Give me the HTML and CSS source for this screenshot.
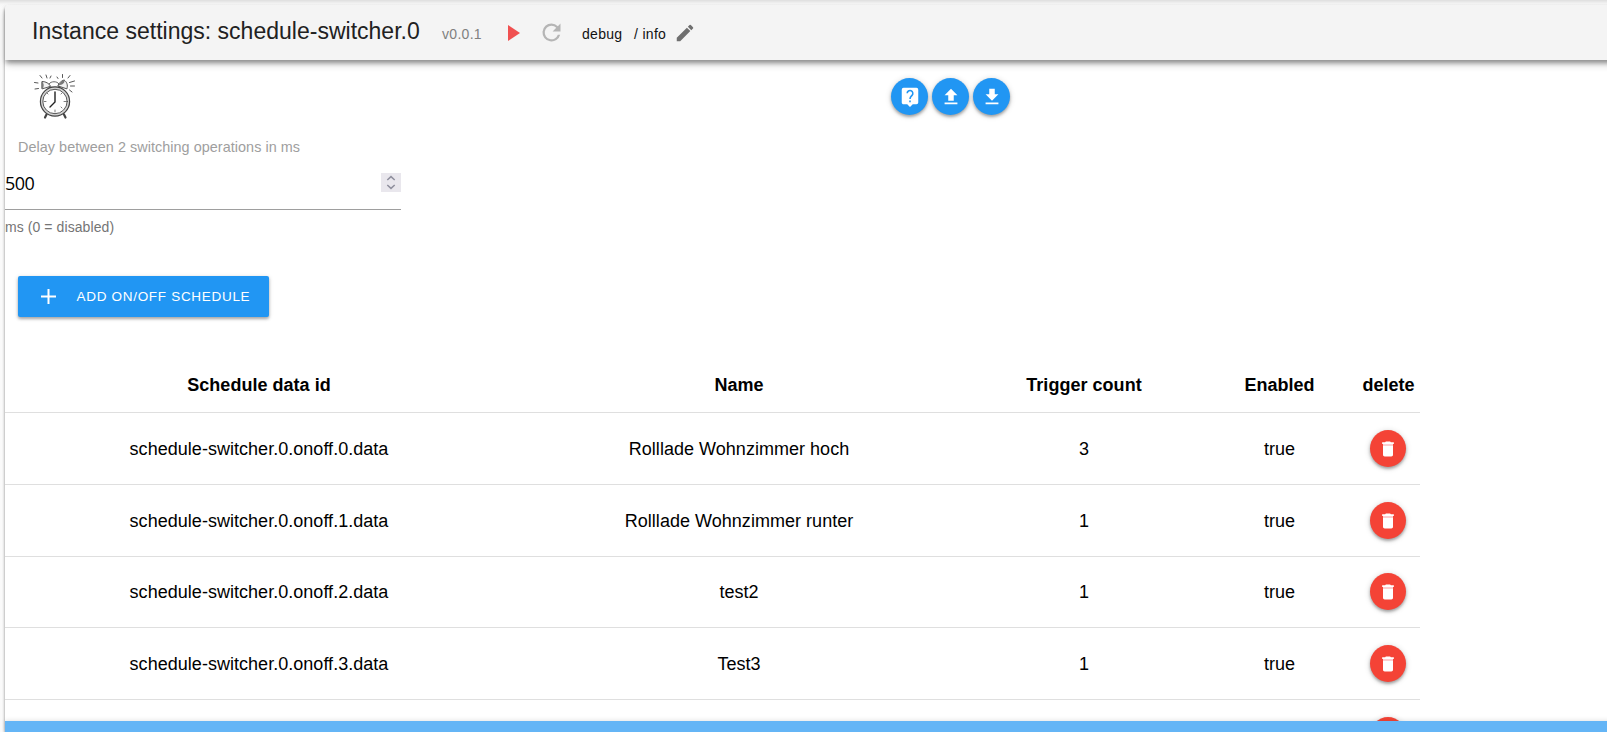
FILE: index.html
```
<!DOCTYPE html>
<html lang="en">
<head>
<meta charset="utf-8">
<title>Instance settings</title>
<link rel="stylesheet" href="styles.css">
</head>
<body>
<svg class="defs" width="0" height="0">
  <symbol id="trash" viewBox="0 0 24 24"><path fill="#fff" d="M6 19c0 1.100.9 2 2 2h8c1.100 0 2-.9 2-2V7.500H6z"/><path fill="#ffcdd2" d="M6 6h12v1.700H6z"/><path fill="#fff" d="M19 4h-3.500l-1-1h-5l-1 1H5v2h14z"/></symbol>
</svg>
<div class="panel">
  <header class="bar">
    <h1 class="title">Instance settings: schedule-switcher.0</h1>
    <span class="version">v0.0.1</span>
    <svg class="play" viewBox="0 0 12 16"><path fill="#f05050" d="M0 0l12 8-12 8z"/></svg>
    <svg class="refresh" viewBox="0 0 24 24"><path fill="#b5b5b5" d="M17.650 6.350A7.958 7.958 0 0 0 12 4a8 8 0 1 0 7.730 10h-2.080A6 6 0 1 1 12 6c1.660 0 3.140.69 4.220 1.780L13 11h7V4z"/></svg>
    <span class="level debug">debug</span>
    <span class="level info">/ info</span>
    <svg class="pencil" viewBox="0 0 24 24"><path fill="#6f6f6f" d="M3 17.250V21h3.750L17.810 9.940l-3.750-3.750zM20.710 7.040a1 1 0 0 0 0-1.410l-2.340-2.340a1 1 0 0 0-1.410 0l-1.830 1.830 3.750 3.750z"/></svg>
  </header>
  <main class="content">
    <div class="tools">
      <svg class="clock" viewBox="0 0 42 45" fill="none" stroke="#444" stroke-linecap="round">
        <path stroke-width=".9" d="M6 1.500l2 2.500M12 1l1 3M17 2l-1 2M23 3l1 1.500M28.500 .5v3M36 1.500l-2 2.500M40.500 7l-5 1.500M40.500 12h-4M35.500 16l2.500 2M.5 8.500l3.500.500M1 15l3.500-.5"/>
        <path fill="#fff" stroke-width=".8" d="M15 13v-3c2-3 8-3 10 0v3z"/>
        <path fill="#f2f2f2" stroke-width=".9" d="M8 14.500V7.500c4 0 7 2 8.500 4.500zM24 11.500c1-2.500 3-4.500 6-5.500 3 2 4 5 3 8.500z"/>
        <path fill="#777" stroke="none" d="M7.500 7.500c2 1 3 3.500 1.500 7H7.500zM24 11.500l4-4.500 2.500-1.500c.5 2-.5 4-2.500 5z"/>
        <path stroke-width="2.200" d="M12.500 40.500l-1.500 3M30 40.500l1.500 3"/>
        <circle cx="21" cy="27.500" r="14.600" fill="#d4d4d4" stroke-width="1.200"/>
        <circle cx="21" cy="27.500" r="12.200" fill="#fff" stroke-width=".9"/>
        <path stroke-width=".7" d="M21 36v2M30 27.500h2M10 27.500h2M27 20l1-1M14 20l-1-1M28 34l-1-1"/>
        <path stroke="#222" stroke-width="1.400" d="M21 18v10l-5 5"/>
      </svg>
      <div class="actions">
        <button class="fab"><svg viewBox="0 0 24 24"><path fill="#fff" d="M19 2H5a2 2 0 0 0-2 2v14c0 1.100.9 2 2 2h4l3 3 3-3h4a2 2 0 0 0 2-2V4a2 2 0 0 0-2-2z"/><path fill="none" stroke="#2196f3" stroke-width="1.700" d="M8.900 8a3.100 3.100 0 1 1 5.300 2.200c-1.200 1.200-2.200 1.700-2.200 3.900M12 15.800v1.900"/></svg></button>
        <button class="fab"><svg viewBox="0 0 24 24"><path fill="#fff" d="M9 16h6v-6h4l-7-7-7 7h4zm-4 2h14v2H5z"/></svg></button>
        <button class="fab"><svg viewBox="0 0 24 24"><path fill="#fff" d="M19 9h-4V3H9v6H5l7 7zM5 18v2h14v-2z"/></svg></button>
      </div>
    </div>
    <div class="field">
      <div class="label">Delay between 2 switching operations in ms</div>
      <div class="input"><span>500</span><svg class="spin" viewBox="0 0 20 19"><path fill="#e9e7ed" d="M0 0h20v19H0z"/><path fill="none" stroke="#8f8f9d" stroke-width="1.500" d="M6.300 7L10 3.600 13.700 7M6.300 12l3.700 3.400 3.700-3.400"/></svg></div>
      <div class="hint">ms (0 = disabled)</div>
    </div>
    <button class="add"><svg viewBox="0 0 15 15"><path fill="none" stroke="#fff" stroke-width="2" d="M7.500 0v15M0 7.500h15"/></svg><span>ADD ON/OFF SCHEDULE</span></button>
    <div class="table">
      <div class="row head"><span>Schedule data id</span><span>Name</span><span>Trigger count</span><span>Enabled</span><span>delete</span></div>
      <div class="row"><span>schedule-switcher.0.onoff.0.data</span><span>Rolllade Wohnzimmer hoch</span><span>3</span><span>true</span><button class="fab red"><svg><use href="#trash"/></svg></button></div>
      <div class="row"><span>schedule-switcher.0.onoff.1.data</span><span>Rolllade Wohnzimmer runter</span><span>1</span><span>true</span><button class="fab red"><svg><use href="#trash"/></svg></button></div>
      <div class="row"><span>schedule-switcher.0.onoff.2.data</span><span>test2</span><span>1</span><span>true</span><button class="fab red"><svg><use href="#trash"/></svg></button></div>
      <div class="row"><span>schedule-switcher.0.onoff.3.data</span><span>Test3</span><span>1</span><span>true</span><button class="fab red"><svg><use href="#trash"/></svg></button></div>
      <div class="row"><span></span><span></span><span></span><span></span><button class="fab red"></button></div>
    </div>
  </main>
  <footer class="footer"></footer>
</div>
</body>
</html>
```
FILE: styles.css
```
* { box-sizing: border-box; }
body {
  margin: 0;
  height: 732px;
  overflow: hidden;
  padding: 5px 0 0 5px;
  background: linear-gradient(#dedede, #f6f6f6 4px, #fafafa 8px);
  font-family: "Liberation Sans", Arial, sans-serif;
}
.defs { position: absolute; }
button { border: 0; padding: 0; font: inherit; }
svg { display: block; flex: none; }
.panel {
  height: 727px;
  display: flex;
  flex-direction: column;
  margin-right: -10px;
  background: #fff;
  border-radius: 4px 0 0 0;
  box-shadow: 0 2px 3px rgba(0,0,0,.5);
}
.bar {
  flex: none;
  height: 55px;
  display: flex;
  align-items: center;
  padding-left: 27px;
  background: #f4f4f4;
  border-radius: 4px 0 0 0;
  box-shadow: 0 4px 4px -1px rgba(0,0,0,.32), 0 5px 8px -1px rgba(0,0,0,.2);
  z-index: 1;
  white-space: nowrap;
}
.title { margin: 0 0 3px; width: 410px; font-size: 23px; font-weight: 400; color: #212121; letter-spacing: .01px; }
.version { width: 66px; margin-top: 3px; font-size: 14px; letter-spacing: .3px; color: #808080; }
.play { width: 12px; height: 16px; }
.refresh { width: 27px; height: 27px; margin-left: 18px; }
.level { margin-top: 3px; font-size: 14px; color: #111; letter-spacing: .3px; }
.debug { width: 52px; margin-left: 17px; }
.info { width: 40px; }
.pencil { width: 22px; height: 22px; }
.content { flex: 1; min-height: 0; overflow: hidden; }
.tools { display: flex; height: 73px; padding: 14px 0 0 29px; }
.clock { width: 42px; height: 45px; }
.actions { display: flex; gap: 4px; margin: 4px 0 0 815px; }
.fab {
  width: 37px; height: 37px;
  display: flex; align-items: center; justify-content: center;
  border-radius: 50%;
  background: #2196f3;
  box-shadow: 0 2px 3px rgba(0,0,0,.3), 0 1px 6px rgba(0,0,0,.16);
}
.fab svg { width: 22px; height: 22px; }
.red { background: #f44336; width: 36px; }
.red svg { width: 20px; height: 20px; margin-top: 1px; }
.field { width: 396px; height: 143px; }
.label { padding-left: 13px; height: 28px; line-height: 28px; font-size: 14.400px; letter-spacing: .05px; color: #9e9e9e; }
.input {
  height: 49px;
  display: flex; justify-content: space-between; align-items: center;
  border-bottom: 1px solid #9e9e9e;
  padding-bottom: 5px;
  font: 18px "Open Sans", "Noto Sans", sans-serif;
  letter-spacing: -.5px;
}
.spin { width: 20px; height: 19px; }
.hint { margin-top: 3px; line-height: 28px; font-size: 14px; color: #757575; letter-spacing: .08px; }
.add {
  display: flex; align-items: center;
  width: 251px; height: 41px;
  margin-left: 13px; padding: 0 0 1px 23px; gap: 20.500px;
  border-radius: 2px;
  background: #2196f3; color: #fff;
  font-size: 13.500px; letter-spacing: .7px;
  white-space: nowrap;
  box-shadow: 0 2px 3px rgba(0,0,0,.28), 0 1px 5px rgba(0,0,0,.14);
}
.add svg { width: 15px; height: 15px; }
.table { width: 1415px; margin-top: 41px; }
.row {
  display: grid;
  grid-template-columns: 507px 453px 237px 154px 64px;
  place-items: center;
  height: 71.750px;
  border-bottom: 1px solid #dfdfdf;
  font-size: 18px;
  letter-spacing: .03px;
  color: #000;
}
.row span { padding-left: 1px; }
.row:not(.head) span { padding-top: 2px; }
.head { height: 55px; font-weight: 700; }
.footer { flex: none; height: 11px; background: #64b5f6; box-shadow: 0 -1px 4px rgba(0,0,0,.1); }
```
